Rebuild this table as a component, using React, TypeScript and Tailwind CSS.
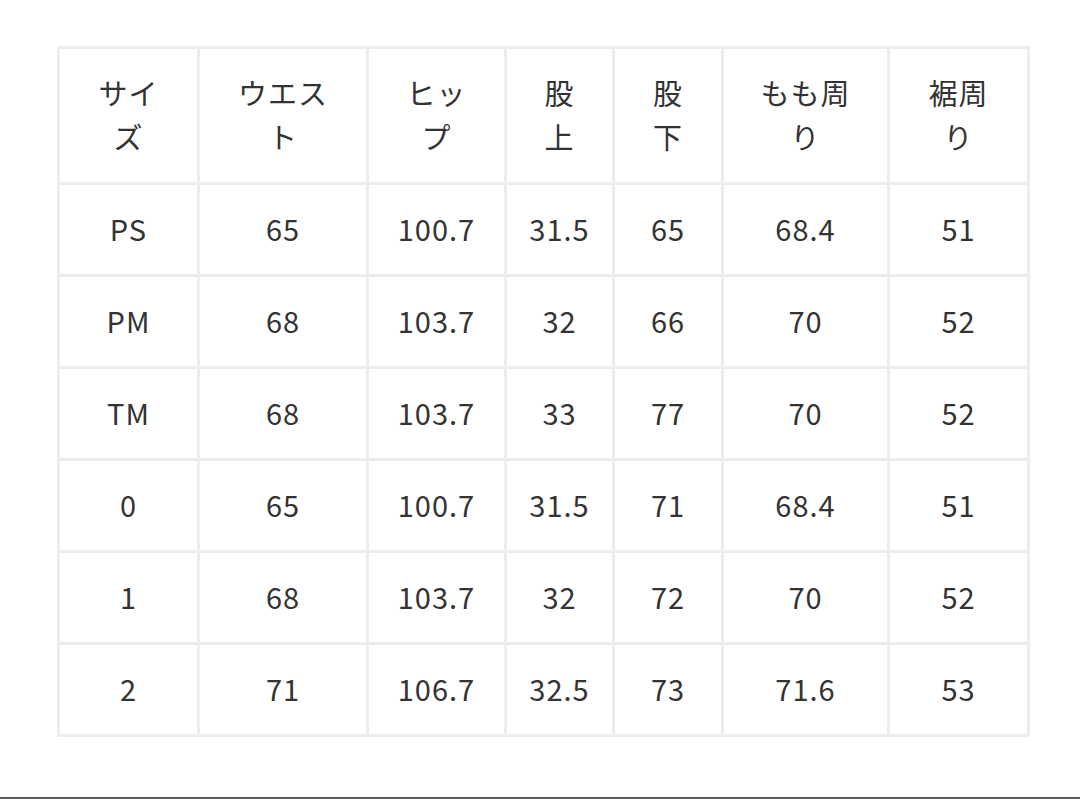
const headers: string[][] = [
  ['サイ', 'ズ'],
  ['ウエス', 'ト'],
  ['ヒッ', 'プ'],
  ['股', '上'],
  ['股', '下'],
  ['もも周', 'り'],
  ['裾周', 'り'],
];

const rows: string[][] = [
  ['PS', '65', '100.7', '31.5', '65', '68.4', '51'],
  ['PM', '68', '103.7', '32', '66', '70', '52'],
  ['TM', '68', '103.7', '33', '77', '70', '52'],
  ['0', '65', '100.7', '31.5', '71', '68.4', '51'],
  ['1', '68', '103.7', '32', '72', '70', '52'],
  ['2', '71', '106.7', '32.5', '73', '71.6', '53'],
];

const widths = ['w-[140px]', 'w-[169px]', 'w-[138px]', 'w-[108px]', 'w-[109px]', 'w-[166px]', 'w-[140px]'];

export default function App() {
  return (
    <div
      className="w-[1080px] h-[799px] bg-white border-b-[2px] border-[#5c5c5c] pt-[46px] pl-[57px] text-[#333333]"
      style={{ fontFamily: '"Noto Sans CJK JP", "Noto Sans", sans-serif' }}
    >
      <table className="border-collapse table-fixed w-[972px] text-[29px] leading-[44px] tracking-[1px]">
        <colgroup>
          {widths.map((w, i) => (
            <col key={i} className={w} />
          ))}
        </colgroup>
        <thead>
          <tr>
            {headers.map((h, i) => (
              <th key={i} className="border-[3px] border-[#ededed] h-[136px] font-normal text-center align-middle p-0 pb-[3px]">
                {h[0]}
                <br />
                {h[1]}
              </th>
            ))}
          </tr>
        </thead>
        <tbody>
          {rows.map((r, i) => (
            <tr key={i}>
              {r.map((c, j) => (
                <td key={j} className="border-[3px] border-[#ededed] h-[92px] text-center align-middle p-0 pb-[4px]">
                  {c}
                </td>
              ))}
            </tr>
          ))}
        </tbody>
      </table>
    </div>
  );
}
